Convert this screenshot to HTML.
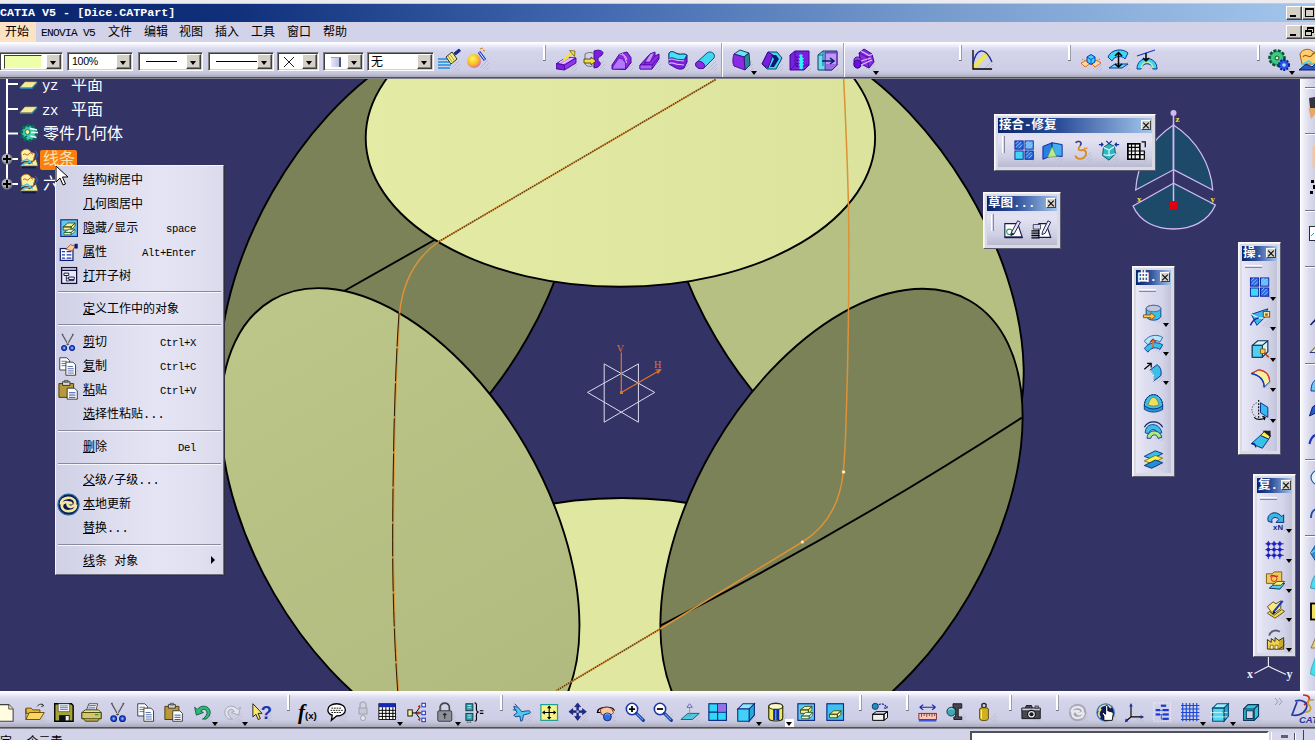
<!DOCTYPE html><html lang="zh"><head><meta charset="utf-8"><title>CATIA V5 - [Dice.CATPart]</title><style>
*{box-sizing:border-box;margin:0;padding:0}
html,body{width:1315px;height:740px;overflow:hidden;background:#d2d2e8}
body{position:relative;font-family:"Liberation Mono","Noto Sans CJK SC",monospace;font-size:12px;color:#000}
.abs{position:absolute}
#top{left:0;top:0;width:1315px;height:4px;background:#ececf0;border-bottom:1px solid #c8c8d0}
#title{left:0;top:4px;width:1315px;height:18px;background:linear-gradient(90deg,#0a246a 0%,#10307c 18%,#4269b0 45%,#7499cc 70%,#a4c6ec 100%)}
#title .t{position:absolute;left:0;top:2px;color:#fff;font:bold 11.7px/14px "Liberation Mono","Noto Sans CJK SC",monospace;white-space:pre;letter-spacing:0}
#menubar{left:0;top:22px;width:1315px;height:20px;background:#d2d2e8}
#menubar span{position:absolute;top:5px;font:12px/13px "Liberation Mono","Noto Sans CJK SC",monospace;white-space:pre}
#menubar span.lat{font-family:"Liberation Mono",monospace;font-size:11.2px;letter-spacing:-.72px}
#tb1{left:0;top:42px;width:1315px;height:37px;background:linear-gradient(180deg,#ffffff 0,#f6f6fd 2px,#dedef2 6px,#d3d3ea 10px,#cecee6 28px,#c2c2d8 32px,#a8a8ba 35px,#50505a 35px,#50505a 36px,#84848e 36px,#84848e 37px)}
#view{left:0;top:79px;width:1300px;height:612px;background:#333366;overflow:hidden}
#tb2{left:0;top:691px;width:1315px;height:38px;background:linear-gradient(180deg,#ffffff 0,#f6f6fd 2px,#dedef2 6px,#d3d3ea 10px,#cecee6 28px,#c2c2d8 32px,#a8a8ba 36px,#50505a 36px,#50505a 37px,#84848e 37px,#84848e 38px)}
#status{left:0;top:729px;width:1315px;height:11px;background:#d2d2e8}
#rcol{left:1300px;top:79px;width:15px;height:612px;background:linear-gradient(90deg,#ffffff 0,#f0f0f8 3px,#dcdcee 9px,#d0d0e6 15px)}
.combo{position:absolute;top:52px;height:19px;background:#fff;border:1px solid;border-color:#808080 #fff #fff #808080;box-shadow:inset 1px 1px 0 #404040, inset -1px -1px 0 #d4d0c8}
.combo .b{position:absolute;right:1px;top:1px;bottom:1px;width:15px;background:#d4d0c8;border:1px solid;border-color:#fff #404040 #404040 #fff;box-shadow:inset -1px -1px 0 #808080}
.combo .b:after{content:"";position:absolute;left:3px;top:6px;border:3.5px solid transparent;border-top:4px solid #000;border-bottom:0}
.sep{position:absolute;width:3px;height:16px;background:#fff;border-right:1px solid #9c9cb0;border-bottom:1px solid #70707c}
.ic{position:absolute;width:24px;height:24px}
.dd{position:absolute;width:0;height:0;border:3.5px solid transparent;border-top:4px solid #000;border-bottom:0}
/* tree */
.tr{position:absolute;color:#fff;font:16px/18px "Liberation Mono","Noto Sans CJK SC",monospace;white-space:pre}
.tr .l{font-family:"Liberation Mono",monospace;font-size:14px;letter-spacing:-.4px}
/* context menu */
#cm{left:55px;top:165px;width:169px;height:410px;background:linear-gradient(90deg,#d0d0e6 0,#dcdcee 30%,#e4e4f4 60%,#e0e0f0 85%,#dadaec 100%);border:1px solid;border-color:#f4f4fc #6e6e80 #6e6e80 #f4f4fc;box-shadow:1px 1px 0 #30303c}
#cm .i{position:absolute;left:27px;font:12px/14px "Liberation Mono","Noto Sans CJK SC",monospace;white-space:pre}
#cm .i .a{font-family:"Liberation Mono",monospace;font-size:10.6px;letter-spacing:-.36px}
#cm .i::first-letter{text-decoration:underline;text-underline-offset:1px}
#cm .k{position:absolute;right:27px;font:10.6px/14px "Liberation Mono",monospace;letter-spacing:-.36px;white-space:pre}
#cm .s{position:absolute;left:2px;right:2px;height:2px;border-top:1px solid #8a8a9c;border-bottom:1px solid #f6f6fe}
/* floating panels */
.pn{position:absolute;background:linear-gradient(180deg,#d6d6ec 0,#e2e2f2 45%,#d0d0e6 75%,#b4b4cc 100%);border:1px solid;border-color:#fafafc #5c5c74 #5c5c74 #fafafc;box-shadow:inset 1px 1px 0 #f0f0f4,inset 0 0 0 3px #dadae4}
.pn.v{background:linear-gradient(90deg,#eeeef8 0,#e0e0f2 25%,#d4d4ea 70%,#bcbcd4 100%)}
.pn .tt{position:absolute;left:3px;top:3px;right:3px;height:15px;background:linear-gradient(90deg,#0a246a 0,#2c4e9a 40%,#a4c6ec 100%);color:#fff;font:bold 12.5px/17px "Liberation Mono","Noto Sans CJK SC",monospace;white-space:pre;overflow:hidden;padding-left:1px}
.pn .x{position:absolute;right:4px;top:5px;width:10px;height:10px;background:#d4d0c8;border:1px solid;border-color:#fff #404040 #404040 #fff;}
.pn .x:before,.pn .x:after{content:"";position:absolute;left:0;top:3.500px;width:8px;height:1.1px;background:#000;transform:rotate(45deg)}
.pn .x:after{transform:rotate(-45deg)}
</style></head><body>
<div id="top" class="abs"></div>
<div id="title" class="abs"><span class="t">CATIA V5 - [Dice.CATPart]</span><div class="abs" style="left:1286px;top:2px;width:16px;height:14px;background:#d4d0c8;border:1px solid;border-color:#fff #404040 #404040 #fff;box-shadow:inset -1px -1px 0 #808080"><div class="abs" style="left:3px;top:8px;width:6px;height:2px;background:#000"></div></div><div class="abs" style="left:1302px;top:2px;width:16px;height:14px;background:#d4d0c8;border:1px solid;border-color:#fff #404040 #404040 #fff;box-shadow:inset -1px -1px 0 #808080"><div class="abs" style="left:2px;top:1px;width:9px;height:9px;border:1px solid #000;border-top-width:2px"></div></div></div>
<div id="menubar" class="abs"><div class="abs" style="left:0;top:0;width:36px;height:20px;background:#fbe3c3"></div>
<span style="left:5px">开始</span>
<span class="lat" style="left:41px">ENOVIA V5</span>
<span style="left:108px">文件</span>
<span style="left:144px">编辑</span>
<span style="left:179px">视图</span>
<span style="left:215px">插入</span>
<span style="left:251px">工具</span>
<span style="left:287px">窗口</span>
<span style="left:323px">帮助</span>
<div class="abs" style="left:1286px;top:3px;width:16px;height:14px;background:#d4d0c8;border:1px solid;border-color:#fff #404040 #404040 #fff;box-shadow:inset -1px -1px 0 #808080"><div class="abs" style="left:3px;top:8px;width:6px;height:2px;background:#000"></div></div><div class="abs" style="left:1302px;top:3px;width:16px;height:14px;background:#d4d0c8;border:1px solid;border-color:#fff #404040 #404040 #fff;box-shadow:inset -1px -1px 0 #808080"><div class="abs" style="left:4px;top:1px;width:7px;height:6px;border:1px solid #000;border-top-width:2px"></div><div class="abs" style="left:2px;top:4px;width:7px;height:6px;border:1px solid #000;border-top-width:2px;background:#d4d0c8"></div></div></div>
<div id="tb1" class="abs"></div>
<div class="combo" style="left:0;width:63px;border-left:0"><div class="abs" style="left:4px;top:2px;width:38px;height:14px;background:#eeffaa;border:1px solid;border-color:#404040 #fff #fff #404040"></div><div class="b"></div></div>
<div class="combo" style="left:67px;width:66px"><span class="abs" style="left:4px;top:2px;font:10.600px/13px 'Liberation Sans',sans-serif;letter-spacing:-.3px">100%</span><div class="b"></div></div>
<div class="combo" style="left:138px;width:65px"><div class="abs" style="left:7px;top:8px;width:31px;height:1px;background:#000"></div><div class="b"></div></div>
<div class="combo" style="left:208px;width:66px"><div class="abs" style="left:7px;top:8px;width:41px;height:1px;background:#000"></div><div class="b"></div></div>
<div class="combo" style="left:277px;width:42px"><svg class="abs" style="left:5px;top:3px" width="12" height="12"><path d="M1 1l10 10M11 1l-10 10" stroke="#202020" stroke-width="1"/></svg><div class="b"></div></div>
<div class="combo" style="left:323px;width:41px"><div class="abs" style="left:7px;top:4px;width:10px;height:10px;background:linear-gradient(90deg,#e8e8f8,#b8c0e0);border-right:2px solid #505070;border-top:1px solid #a0a0c0"></div><div class="b"></div></div>
<div class="combo" style="left:367px;width:67px"><span class="abs" style="left:3px;top:1px;font:12px/14px 'Noto Sans CJK SC',sans-serif">无</span><div class="b"></div></div>
<svg class="abs" style="left:437px;top:48px" width="24" height="24" viewBox="0 0 24 24"><path d="M14 21l8-8M17 22l6-6M20 23l3-3" stroke="#a8a8bc" stroke-width="1" opacity=".55"/><path d="M1 11h10M1 14h12M1 17h13M1 20h12" stroke="#1890e0" stroke-width="1.6"/><path d="M9 9l6-5 5 7-6 5z" fill="#f4f090" stroke="#303030" stroke-width="1"/><path d="M11 8l5 7M13 6.500l5 7" stroke="#b0a020" stroke-width="1"/><path d="M17 5l5-4 1.500 2-5 4z" fill="#1030a0" stroke="#081860" stroke-width=".8"/></svg>
<svg class="abs" style="left:466px;top:47px" width="24" height="24" viewBox="0 0 24 24"><path d="M14 21l8-8M17 22l6-6M20 23l3-3" stroke="#a8a8bc" stroke-width="1" opacity=".55"/><defs><radialGradient id="gb" cx=".4" cy=".35" r=".7"><stop offset="0" stop-color="#fff860"/><stop offset=".55" stop-color="#f8c020"/><stop offset="1" stop-color="#e060c0"/></radialGradient></defs><circle cx="8" cy="14" r="7" fill="url(#gb)"/><path d="M13 5l6 8" stroke="#1840c0" stroke-width="3"/><path d="M13.500 5.500l5 7" stroke="#fff" stroke-width="1"/><path d="M14 2l3-1M17 3l2 1" stroke="#e08030" stroke-width="1.2"/></svg>
<div class="sep" style="left:543px;top:45px"></div>
<svg class="abs" style="left:554px;top:48px" width="24" height="24" viewBox="0 0 24 24"><path d="M14 21l8-8M17 22l6-6M20 23l3-3" stroke="#a8a8bc" stroke-width="1" opacity=".55"/><path d="M2.500 15.500L13 9l9 1-11.500 7z" fill="#c48cff" stroke="#4a0aa0" stroke-width=".9"/><path d="M2.500 15.500l8 1.500v5l-8-1z" fill="#7a1ee0" stroke="#4a0aa0" stroke-width=".9"/><path d="M10.500 17L22 10v5l-11.500 7z" fill="#8e36ec" stroke="#4a0aa0" stroke-width=".9"/><path d="M5.500 14.500l9-5M8.500 15.500l10-5.500" stroke="#f0c8ff" stroke-width="1.300"/><path d="M9.500 12l9-7.500" stroke="#f0e040" stroke-width="2.600"/><path d="M15.500 2.500l5.500.5-.5 5.500z" fill="#f0e040" stroke="#605000" stroke-width=".7"/></svg>
<svg class="abs" style="left:582px;top:48px" width="24" height="24" viewBox="0 0 24 24"><path d="M14 21l8-8M17 22l6-6M20 23l3-3" stroke="#a8a8bc" stroke-width="1" opacity=".55"/><path d="M12 3c5-2 9 0 9 2s-4 4-5 5v3c3 1 3 4 0 6l-4 1z" fill="#7a1ee0" stroke="#4a0aa0"/><path d="M3 6c3-2 7-2 9 0M3 6v10c2 3 7 3 9 1" stroke="#707070" stroke-width="1" fill="none"/><path d="M2 11h7v-2l5 4-5 4v-2h-7z" fill="#f0e040" stroke="#403000" stroke-width=".8"/></svg>
<svg class="abs" style="left:610px;top:48px" width="24" height="24" viewBox="0 0 24 24"><path d="M14 21l8-8M17 22l6-6M20 23l3-3" stroke="#a8a8bc" stroke-width="1" opacity=".55"/><path d="M2 21v-4l7.500-11 7.500-2 4 5.500v5l-5.500 7z" fill="#8a2be2" stroke="#4a0aa0"/><path d="M2 21l2-4 5-7 3.500 1 3 4v6z" fill="#b478ff" stroke="#4a0aa0" stroke-width=".7"/><path d="M9.500 6c3 0 5 2 6 5l1 4M12 5.500c2 1 4 3 5 6" stroke="#dcc0ff" stroke-width="1" fill="none"/><path d="M15.500 21.500l5.500-7" stroke="#4a0aa0"/></svg>
<svg class="abs" style="left:638px;top:48px" width="24" height="24" viewBox="0 0 24 24"><path d="M14 21l8-8M17 22l6-6M20 23l3-3" stroke="#a8a8bc" stroke-width="1" opacity=".55"/><path d="M2 21v-4l10-11 5-2v4l4-2v5l-7 10z" fill="#8a2be2" stroke="#4a0aa0"/><path d="M2 17l5 0 0-3 5-8M7 17l7 0 7-8M7 14l5 0 5-6" stroke="#4a0aa0" stroke-width=".8" fill="none"/><path d="M7 14l5-8 4.500-1.500-4.500 9.500z" fill="#c890ff" stroke="#4a0aa0" stroke-width=".6"/><path d="M2 17h12v4h-12z" fill="#a860f8" stroke="#4a0aa0" stroke-width=".7"/></svg>
<svg class="abs" style="left:666px;top:48px" width="24" height="24" viewBox="0 0 24 24"><path d="M14 21l8-8M17 22l6-6M20 23l3-3" stroke="#a8a8bc" stroke-width="1" opacity=".55"/><path d="M3 5c3-3 6 0 9 1s6-1 9 1v7l-3 6c-3 2-6 1-8 0l-7-4z" fill="#7a1ee0" stroke="#3a0a90"/><path d="M3 5c3-3 6 0 9 1s6-1 9 1l-3 5c-3-1-5 0-8-1s-5-2-7 0z" fill="#48e0f4" stroke="#0a5070"/><path d="M3 12c2-2 4-1 7 0s5 0 8 1M3 15.500c2-1.500 4-.5 7 .5s5 0 8 1" stroke="#d8b0ff" stroke-width="1.200" fill="none"/></svg>
<svg class="abs" style="left:694px;top:48px" width="24" height="24" viewBox="0 0 24 24"><path d="M14 21l8-8M17 22l6-6M20 23l3-3" stroke="#a8a8bc" stroke-width="1" opacity=".55"/><path d="M2 15l11-10c4-3 9 1 7 5l-10 10c-4 2-10-1-8-5z" fill="#40d8f0" stroke="#0a5070"/><path d="M2 15c1-3 6-2 8 1 1 2 1 3 0 4-4 2-10-1-8-5z" fill="#8a2be2" stroke="#4a0aa0"/></svg>
<div class="abs" style="left:721px;top:43px;width:2px;height:34px;background:#fff;border-left:1px solid #a0a0b6"></div>
<svg class="abs" style="left:730px;top:48px" width="24" height="24" viewBox="0 0 24 24"><path d="M14 21l8-8M17 22l6-6M20 23l3-3" stroke="#a8a8bc" stroke-width="1" opacity=".55"/><path d="M4 6l6-4 9 3-5 4z" fill="#68e4f4" stroke="#0a3050" stroke-width=".9"/><path d="M14 9l5-4 1 12-5 5z" fill="#2a8896" stroke="#0a3050" stroke-width=".9"/><path d="M4 6l10 3 1 13-11-4c-2-4-1-9 0-12z" fill="#8a2be2" stroke="#3a0a90" stroke-width=".9"/></svg>
<svg class="abs" style="left:760px;top:48px" width="24" height="24" viewBox="0 0 24 24"><path d="M14 21l8-8M17 22l6-6M20 23l3-3" stroke="#a8a8bc" stroke-width="1" opacity=".55"/><path d="M2 16l6-12h9l5 6-6 11h-9z" fill="#40d8f0" stroke="#0a4060"/><path d="M2 16l6-12 5 3-5 13z" fill="#7a1ee0" stroke="#3a0a90"/><path d="M11 7h5l3 4-5 8h-4l4-8z" fill="#0a1a70"/></svg>
<svg class="abs" style="left:788px;top:48px" width="24" height="24" viewBox="0 0 24 24"><path d="M14 21l8-8M17 22l6-6M20 23l3-3" stroke="#a8a8bc" stroke-width="1" opacity=".55"/><path d="M2 7l5-4h14v14l-5 5h-14z" fill="#7a1ee0" stroke="#3a0a90"/><path d="M7 3v14l-5 5M7 17h14" stroke="#3a0a90" stroke-width=".7" fill="none"/><path d="M11 7l2-1 2 1.500-1 1.500 2 1.500-1.500 1.500 1.500 1.500-1.500 1.500 1.500 1.500-1.500 1.500 1 2-2 1.500-2.500-1 1-2-1.500-1.500 1.500-1.500-1.500-1.500 1.500-1.500-1.500-1.500 1.500-1.500z" fill="#30f0f8"/><path d="M8 9l2 .5M8 12l2 .5M8 15l2 .5M8 18l2 .5" stroke="#0a1a70" stroke-width="1"/></svg>
<svg class="abs" style="left:816px;top:48px" width="24" height="24" viewBox="0 0 24 24"><path d="M14 21l8-8M17 22l6-6M20 23l3-3" stroke="#a8a8bc" stroke-width="1" opacity=".55"/><path d="M2 7l5-4h14v14l-5 5h-14z" fill="#68dcf0" stroke="#0a4060"/><path d="M9 4h12v13l-5 5h-7z" fill="#9a68e0" stroke="#3a0a90" stroke-width=".7"/><path d="M10 6h10v10h-10z" fill="#c8a8f8" opacity=".75"/><path d="M7 3v15M2 7h5" stroke="#0a4060" stroke-width=".7" fill="none"/><path d="M6 13h11M14 10l4 3-4 3" stroke="#0a1a70" stroke-width="1.500" fill="none"/></svg>
<div class="dd" style="left:751px;top:71px"></div>
<div class="abs" style="left:843px;top:43px;width:2px;height:34px;background:#fff;border-left:1px solid #a0a0b6"></div>
<svg class="abs" style="left:852px;top:48px" width="24" height="24" viewBox="0 0 24 24"><path d="M14 21l8-8M17 22l6-6M20 23l3-3" stroke="#a8a8bc" stroke-width="1" opacity=".55"/><path d="M7 5l5-4 8 5 2 8-5 6-8-4z" fill="#8a2be2" stroke="#3a0a90"/><path d="M7 5l8 4 2 11M15 9l5-3" stroke="#3a0a90" stroke-width=".8" fill="none"/><path d="M9 3l8 4.500 4-1.500" stroke="#dcc0ff" stroke-width="1.200" fill="none"/><path d="M2 12c0-4 7-4 7 0v5c0 4-7 4-7 0z" fill="#9a40f0" stroke="#3a0a90"/><ellipse cx="5.500" cy="16" rx="3.500" ry="4" fill="#7010e0" stroke="#3a0a90"/><path d="M9 13l10-3M9 17l11-5" stroke="#dcc0ff" stroke-width="1.200" fill="none"/></svg>
<div class="dd" style="left:873px;top:71px"></div>
<div class="sep" style="left:959px;top:45px"></div>
<svg class="abs" style="left:970px;top:48px" width="24" height="24" viewBox="0 0 24 24"><path d="M14 21l8-8M17 22l6-6M20 23l3-3" stroke="#a8a8bc" stroke-width="1" opacity=".55"/><path d="M4 19l14-14" stroke="#f0e850" stroke-width="3.500"/><path d="M3 2v19h19" stroke="#000" stroke-width="1.300" fill="none"/><path d="M3 16c3-16 12-18 19-2" stroke="#1828b0" stroke-width="1.300" fill="none"/></svg>
<div class="sep" style="left:1068px;top:45px"></div>
<svg class="abs" style="left:1079px;top:48px" width="24" height="24" viewBox="0 0 24 24"><path d="M14 21l8-8M17 22l6-6M20 23l3-3" stroke="#a8a8bc" stroke-width="1" opacity=".55"/><path d="M2 15l6-3 4 3-6 4z" fill="#ffd8a0" stroke="#e07020"/><path d="M12 15l5-3 5 3-6 4z" fill="#ffd8a0" stroke="#e07020"/><path d="M3 11l4 2M21 11l-4 2" stroke="#e07020" stroke-dasharray="1.500 1"/><path d="M8 9l4-2.500 4 2.500v5l-4 2.500-4-2.500z" fill="#40d0f8" stroke="#0838c0"/><path d="M8 9l4 2.500 4-2.500M12 11.500v5" stroke="#0838c0" stroke-width=".8" fill="none"/></svg>
<svg class="abs" style="left:1107px;top:48px" width="24" height="24" viewBox="0 0 24 24"><path d="M14 21l8-8M17 22l6-6M20 23l3-3" stroke="#a8a8bc" stroke-width="1" opacity=".55"/><path d="M1 9c3-8 15-9 20-4l-3 6c-3-4-11-3-13 2z" fill="#40d8f0" stroke="#0838a0"/><path d="M2 20l6-4h13l-6 4z" fill="#60e0f8" stroke="#0838a0"/><path d="M11.500 5v14M8 8l3.500-3.500 3.500 3.500M8 16l3.500 3 3.500-3" stroke="#000" stroke-width="1.500" fill="none"/></svg>
<svg class="abs" style="left:1135px;top:48px" width="24" height="24" viewBox="0 0 24 24"><path d="M14 21l8-8M17 22l6-6M20 23l3-3" stroke="#a8a8bc" stroke-width="1" opacity=".55"/><path d="M2 8l18-6" stroke="#1838c0" stroke-width="1.300"/><path d="M2 21c0-14 20-14 20 0l-4 0c-1-7-11-7-12 0z" fill="#40d8f0" stroke="#0838a0"/><path d="M6 20c2-8 10-8 12 0" fill="none" stroke="#c0f0a0" stroke-width="1.500"/><path d="M11 5v8M8 10l3 3 3-3" stroke="#000" stroke-width="1.500" fill="none"/></svg>
<div class="sep" style="left:1257px;top:45px"></div>
<svg class="abs" style="left:1268px;top:48px" width="24" height="24" viewBox="0 0 24 24"><path d="M14 21l8-8M17 22l6-6M20 23l3-3" stroke="#a8a8bc" stroke-width="1" opacity=".55"/><circle cx="9" cy="10" r="7.500" fill="#30b878" stroke="#0a5030" stroke-dasharray="3 1.500" stroke-width="2.500"/><circle cx="9" cy="10" r="5.500" fill="#40c888"/><circle cx="9" cy="10" r="2" fill="#e8f8a0" stroke="#0a5030"/><circle cx="16" cy="17" r="5" fill="#2858e8" stroke="#0820a0" stroke-dasharray="2 1.200" stroke-width="2"/><circle cx="16" cy="17" r="1.800" fill="#c0d8ff"/></svg>
<div class="dd" style="left:1289px;top:71px"></div>
<svg class="abs" style="left:1298px;top:48px" width="24" height="24" viewBox="0 0 24 24"><path d="M2 6c2-5 9-6 12-3s8 0 9 3l-2 10h-17z" fill="#ffd070" stroke="#a06010"/><path d="M5 9c3-5 6 3 9-2s5 1 6 0" stroke="#b05a10" stroke-width="1.300" fill="none"/><path d="M1 22l7-6 6 3 6-6 3 9z" fill="#2858c8" stroke="#081860"/><path d="M3 17l8-4 5 4" stroke="#40d8f0" stroke-width="1.500" fill="none"/></svg>
<div id="view" class="abs"><svg class="abs" style="left:0;top:0" width="1300" height="612" viewBox="0 79 1300 612">
<defs><linearGradient id="gy" x1="0" x2="1" y1="0" y2="0"><stop offset="0" stop-color="#e3eba4"/><stop offset="1" stop-color="#dbe39c"/></linearGradient><linearGradient id="gm" gradientUnits="userSpaceOnUse" x1="-255" x2="255" y1="0" y2="0"><stop offset="0" stop-color="#bcc688"/><stop offset="1" stop-color="#b0ba7f"/></linearGradient></defs>
<ellipse cx="0" cy="0" rx="254.7" ry="149.0" transform="translate(622.2 647.0) rotate(0.0)" fill="#dfe7a0" stroke="#000" stroke-width="1.9"/>
<ellipse cx="0" cy="0" rx="256.4" ry="146.9" transform="translate(399.7 265.3) rotate(-60.3)" fill="#7b8258" stroke="#000" stroke-width="1.9"/>
<ellipse cx="0" cy="0" rx="257.5" ry="145.9" transform="translate(841.8 264.3) rotate(59.2)" fill="#b6c083" stroke="#000" stroke-width="1.9"/>
<path d="M330 299 L445 234" stroke="#000" stroke-width="1.9" fill="none"/>
<ellipse cx="0" cy="0" rx="254.7" ry="149.0" transform="translate(620.4 137.8) rotate(0.0)" fill="url(#gy)" stroke="#000" stroke-width="1.9"/>
<ellipse cx="0" cy="0" rx="254.7" ry="145.7" transform="translate(400.0 520.3) rotate(59.9)" fill="url(#gm)" stroke="#000" stroke-width="1.9"/>
<ellipse cx="0" cy="0" rx="255.1" ry="147.6" transform="translate(841.5 521.2) rotate(-59.7)" fill="#7b8258" stroke="#000" stroke-width="1.9"/>
<path d="M660.5 625.6 Q846.9 530.8 1021.8 417.6" stroke="#000" stroke-width="1.9" fill="none"/>
<path d="M843.7 79 C846 130 848.5 180 848.8 230 C849.2 290 848.5 340 846.4 410 C845.6 440 844.6 458 843.3 472 C840 505 825 528 802.4 542 L660 629" stroke="#dc9238" stroke-width="1.5" fill="none"/>
<path d="M660 629 L556.5 690.5" stroke="#dc9238" stroke-width="1.6" fill="none"/>
<path d="M660 629 L556.5 690.5" stroke="#5a3a10" stroke-width="1.6" stroke-dasharray="1.2 1.2" fill="none"/>
<path d="M439 241.5 L715.7 79.5" stroke="#dc9238" stroke-width="1.6" fill="none"/>
<path d="M439 241.5 L715.7 79.5" stroke="#5a3a10" stroke-width="1.6" stroke-dasharray="1.2 1.2" fill="none"/>
<path d="M439 241.5 C418 256 403 280 399.5 313.5" stroke="#dc9238" stroke-width="1.5" fill="none"/>
<path d="M399.5 313.5 C397 350 395.5 390 394.5 430 C393.5 480 392.8 530 393.3 570 C394 620 396 660 398.2 691" stroke="#dc9238" stroke-width="2" fill="none"/>
<path d="M399 313.5 C396.5 350 395 390 394 430 C393 480 392.3 530 392.8 570 C393.5 620 395.5 660 397.7 691" stroke="#2a1a08" stroke-width="1" stroke-dasharray="33 2" fill="none"/>
<rect x="842" y="470.5" width="3" height="3" fill="#fff" stroke="#dc9238" stroke-width=".6"/>
<circle cx="802.4" cy="542" r="1.6" fill="#fff" stroke="#dc9238" stroke-width=".6"/>
<path d="M604.2 363.9 L654.7 392.4 L604.2 422.2 Z M638.4 363.9 L587.5 392.4 L638.4 422.2 Z" stroke="#dcdcf0" stroke-width="1" fill="none"/>
<path d="M621.3 392.4 V352.5 M621.3 392.4 L660 370.2 M655.5 370 L660.5 369.6 L657.6 373.6" stroke="#e0742c" stroke-width="1.2" fill="none"/>
<rect x="620" y="391" width="3" height="3" fill="#e0742c"/>
<text x="616.8" y="352" font-family="Liberation Serif,serif" font-size="10" fill="#e0742c">V</text>
<text x="654" y="368" font-family="Liberation Serif,serif" font-size="10" fill="#e0742c">H</text>
<path d="M1173.500 125C1150 140 1137 165 1135.700 190L1173.500 169.700Z" fill="#1c4a68" stroke="#d4b8f4" stroke-width="1.300"/>
<path d="M1173.500 125C1197 140 1211 165 1212.700 190L1173.500 169.700Z" fill="#1c4a68" stroke="#d4b8f4" stroke-width="1.300"/>
<path d="M1173.500 183.200L1133 206C1140 222 1156 229 1173.500 229S1208 222 1215.400 205Z" fill="#1c4a68" stroke="#d4b8f4" stroke-width="1.300"/>
<path d="M1173.500 116V204" stroke="#d4b8f4" stroke-width="1.500"/>
<circle cx="1173.500" cy="113" r="3" fill="#d4b8f4"/>
<rect x="1169.500" y="201" width="8" height="8.500" fill="#e00010"/>
<text x="1175.5" y="122" font-family="Liberation Serif,serif" font-weight="bold" font-size="9" fill="#f0e040">z</text>
<text x="1137" y="202" font-family="Liberation Serif,serif" font-weight="bold" font-size="9" fill="#f0e040">x</text>
<text x="1210.5" y="202" font-family="Liberation Serif,serif" font-weight="bold" font-size="9" fill="#f0e040">y</text>
<path d="M1268.400 666.300V657M1268.400 666.300L1254.500 673.500M1268.400 666.300L1286 674.500" stroke="#f0f0f8" stroke-width="1.100" fill="none"/>
<text x="1247" y="678" font-family="Liberation Serif,serif" font-weight="bold" font-size="12" fill="#f0f0f8">x</text><text x="1286.500" y="678" font-family="Liberation Serif,serif" font-weight="bold" font-size="12" fill="#f0f0f8">y</text>
</svg><div class="abs" style="left:0;top:-79px"><svg class="abs" style="left:0;top:79px" width="60" height="120" viewBox="0 79 60 120">
<path d="M7 79V184 M7 84H18 M7 109H18 M7 133.500H18 M7 159H18 M7 184H18" stroke="#fff" stroke-width="2" fill="none"/>
<path d="M20 87.5l5-5.500h12l-5 5.500z" fill="#f4ec98" stroke="#c8b850" stroke-width=".6"/><path d="M20 88.3h12l5-5.500" stroke="#2880b0" stroke-width="1.200" fill="none"/>
<path d="M20 112.5l5-5.500h12l-5 5.500z" fill="#f4ec98" stroke="#c8b850" stroke-width=".6"/><path d="M20 113.3h12l5-5.500" stroke="#2880b0" stroke-width="1.200" fill="none"/>
<circle cx="29" cy="133" r="7.500" fill="#28b898" stroke="#0a6858" stroke-width="3.400" stroke-dasharray="2.600 2.100"/><circle cx="29" cy="133" r="6" fill="#38d0b0"/><circle cx="27.500" cy="132" r="2.400" fill="#f4f490" stroke="#0a6050" stroke-width=".8"/><path d="M30 128.500l7 1.500M31 132.500l7 0M30.500 136l6 1.500" stroke="#f0fffa" stroke-width="1.300"/><path d="M24 138l3-2" stroke="#0a5040" stroke-width="1.200"/>
<g transform="translate(20 150.0)"><path d="M1 3c1-4 7-5 9-2s4 1 5 3l-2 7h-11z" fill="#fff0a0" stroke="#b87820" stroke-width=".8"/><path d="M3 5c2-3 4 2 6-1s3 1 4 0" stroke="#b05a10" stroke-width="1" fill="none"/><path d="M0 16l5-4 5 2 6-5 2 7z" fill="#f4f0a0" stroke="#705010" stroke-width=".7"/><path d="M2 17.500h14" stroke="#101850" stroke-width="1.600"/><path d="M1 12l6-3 4 3M2 15l7-3 4 2" stroke="#40c8f0" stroke-width="1.200" fill="none"/><path d="M15 1c3 2 3 6 0 8" stroke="#3070d0" stroke-width="1" fill="none"/></g>
<g transform="translate(20 175.0)"><path d="M1 3c1-4 7-5 9-2s4 1 5 3l-2 7h-11z" fill="#fff0a0" stroke="#b87820" stroke-width=".8"/><path d="M3 5c2-3 4 2 6-1s3 1 4 0" stroke="#b05a10" stroke-width="1" fill="none"/><path d="M0 16l5-4 5 2 6-5 2 7z" fill="#f4f0a0" stroke="#705010" stroke-width=".7"/><path d="M2 17.500h14" stroke="#101850" stroke-width="1.600"/><path d="M1 12l6-3 4 3M2 15l7-3 4 2" stroke="#40c8f0" stroke-width="1.200" fill="none"/><path d="M15 1c3 2 3 6 0 8" stroke="#3070d0" stroke-width="1" fill="none"/></g>
<circle cx="7" cy="159" r="5.500" fill="#80808c"/><circle cx="6.300" cy="158.3" r="4.200" fill="#b0b0bc"/><path d="M3 159h8M7 155v8" stroke="#000" stroke-width="2"/>
<circle cx="7" cy="184" r="5.500" fill="#80808c"/><circle cx="6.300" cy="183.3" r="4.200" fill="#b0b0bc"/><path d="M3 184h8M7 180v8" stroke="#000" stroke-width="2"/>
</svg>
<div class="tr" style="left:42px;top:77px"><span class="l">yz</span></div><div class="tr" style="left:71px;top:77px">平面</div>
<div class="tr" style="left:42px;top:102px"><span class="l">zx</span></div><div class="tr" style="left:71px;top:102px">平面</div>
<div class="tr" style="left:43px;top:126px">零件几何体</div>
<div class="abs" style="left:40px;top:150px;width:37px;height:20px;background:#fb7f0e;border-radius:2px"></div>
<div class="tr" style="left:43px;top:151px;color:#fbe0b0">线条</div>
<div class="tr" style="left:43px;top:176px">六</div></div></div>
<div id="cm" class="abs">
<span class="i" style="top:8px">结构树居中</span>
<span class="i" style="top:32px">几何图居中</span>
<span class="i" style="top:56px">隐藏/显示</span>
<span class="k" style="top:56px">space</span>
<span class="i" style="top:80px">属性</span>
<span class="k" style="top:80px">Alt+Enter</span>
<span class="i" style="top:104px">打开子树</span>
<div class="s" style="top:125px"></div>
<span class="i" style="top:137px">定义工作中的对象</span>
<div class="s" style="top:158px"></div>
<span class="i" style="top:170px">剪切</span>
<span class="k" style="top:170px">Ctrl+X</span>
<span class="i" style="top:194px">复制</span>
<span class="k" style="top:194px">Ctrl+C</span>
<span class="i" style="top:218px">粘贴</span>
<span class="k" style="top:218px">Ctrl+V</span>
<span class="i" style="top:242px">选择性粘贴...</span>
<div class="s" style="top:264px"></div>
<span class="i" style="top:275px">删除</span>
<span class="k" style="top:275px">Del</span>
<div class="s" style="top:297px"></div>
<span class="i" style="top:308px">父级/子级...</span>
<span class="i" style="top:332px">本地更新</span>
<span class="i" style="top:356px">替换...</span>
<div class="s" style="top:378px"></div>
<span class="i" style="top:389px">线条 对象</span>
<div class="abs" style="left:155px;top:390px;border:4px solid transparent;border-left:4px solid #000;border-right:0"></div>
<svg class="abs" style="left:3.5px;top:52.5px" width="19" height="19" viewBox="0 0 24 24"><rect x="1" y="1" width="21" height="21" fill="#60c8f0" stroke="#0a2880" stroke-width="1.400"/><path d="M4 10l6-5h9l-5 5z M4 10h10v4h-10z M14 10l5-5v4l-5 5z" fill="#f0f0a0" stroke="#304000" stroke-width="1"/><path d="M5 17l6-4h8l-5 4z M5 17h9v3h-9z M14 17l5-4v3l-5 4z" fill="#e8f8e8" stroke="#306030" stroke-width="1"/></svg><svg class="abs" style="left:3px;top:77px" width="20" height="19" viewBox="0 0 24 24"><rect x="1" y="7" width="16" height="15" fill="#fff" stroke="#0a1a70" stroke-width="1.500"/><path d="M3 11h4M9 11h6M3 15h4M9 15h6M3 19h4M9 19h6" stroke="#1838c0" stroke-width="1.600"/><path d="M8 8l6-6 6 2-4 6z" fill="#f8c8a0" stroke="#804020" stroke-width=".9"/><rect x="19" y="1" width="4" height="6" fill="#0a1a70"/></svg><svg class="abs" style="left:4px;top:100px" width="19" height="19" viewBox="0 0 24 24"><rect x="2" y="2" width="19" height="20" fill="#e8e8f8" stroke="#101040" stroke-width="1.600"/><path d="M2 5.500h19" stroke="#101040" stroke-width="1.600"/><path d="M5 9h6v3h-6zM11 14h7v3h-7zM11 18.500h7" stroke="#101040" stroke-width="1.200" fill="#fff"/><path d="M8 12v7h3M8 15.500h3" stroke="#101040" stroke-width="1" fill="none"/></svg><svg class="abs" style="left:3px;top:166px" width="19" height="21" viewBox="0 0 24 24"><path d="M4 1l8 14M18 1l-8 14" stroke="#50505c" stroke-width="2"/><path d="M5.500 2l6.500 11.500M16.500 2l-6.500 11.500" stroke="#e8e8f0" stroke-width=".8"/><circle cx="6.500" cy="19" r="3.300" fill="#2858e0" stroke="#0a1c90" stroke-width="1.200"/><circle cx="16.500" cy="19" r="3.300" fill="#2858e0" stroke="#0a1c90" stroke-width="1.200"/><circle cx="6.500" cy="19" r="1.200" fill="#a0c0ff"/><circle cx="16.500" cy="19" r="1.200" fill="#a0c0ff"/></svg><svg class="abs" style="left:2px;top:190px" width="21" height="21" viewBox="0 0 24 24"><path d="M14 21l8-8M17 22l6-6M20 23l3-3" stroke="#a8a8bc" stroke-width="1" opacity=".55"/><path d="M2 2h8l3 3v11h-11z" fill="#fff" stroke="#303030"/><path d="M4 6h6M4 8.500h7M4 11h7" stroke="#3050a0" stroke-width=".9"/><path d="M9 7h8l3 3v12h-11z" fill="#fff" stroke="#303030"/><path d="M11 12h6M11 14.500h7M11 17h7M11 19.500h7" stroke="#3050a0" stroke-width=".9"/></svg><svg class="abs" style="left:2px;top:213px" width="22" height="22" viewBox="0 0 24 24"><path d="M14 21l8-8M17 22l6-6M20 23l3-3" stroke="#a8a8bc" stroke-width="1" opacity=".55"/><path d="M1 5h16v15h-16z" fill="#b89838" stroke="#403000"/><path d="M5 3h8v4h-8z" fill="#d8d8d8" stroke="#303030"/><path d="M7 1.500h4v2h-4z" fill="#909090" stroke="#303030" stroke-width=".6"/><path d="M10 10h8l3 3v9h-11z" fill="#fff" stroke="#303030"/><path d="M12 15h7M12 17.500h7M12 20h7" stroke="#2040a0" stroke-width="1"/></svg><svg class="abs" style="left:1px;top:327px" width="23" height="23" viewBox="0 0 24 24"><circle cx="12" cy="12" r="11" fill="#101850"/><path d="M4 12c0-9 14-9 15-2 0 5-7 6-8 2 0-2.500 4-2.500 4 0M20 12c0 9-14 9-15 2 0-5 7-6 8-2" stroke="#f0e8a0" stroke-width="2.800" fill="none"/><circle cx="12" cy="12" r="11" fill="none" stroke="#2868a8" stroke-width="1.200"/></svg>
</div>
<svg class="abs" style="left:55px;top:165px" width="14" height="22" viewBox="0 0 14 22"><path d="M1 1v16l4-4 3 7 2.500-1-3-7h5.500z" fill="#fff" stroke="#000" stroke-width="1"/></svg>
<div class="pn" style="left:994px;top:114px;width:162px;height:57px"><div class="tt">接合-修复</div><div class="x"></div><div class="abs" style="left:7px;top:21px;width:3px;height:17px;border-left:1px solid #fff;border-right:1px solid #8888a0;background:#d8d8ea"></div><svg class="abs" style="left:19px;top:25px" width="22" height="22" viewBox="0 0 24 24"><path d="M14 21l8-8M17 22l6-6M20 23l3-3" stroke="#a8a8bc" stroke-width="1" opacity=".55"/><rect x="1" y="1" width="9" height="9" fill="#2868e0" stroke="#0820a0"/><rect x="12" y="1" width="9" height="9" fill="#60b8f8" stroke="#0820a0"/><rect x="1" y="12" width="9" height="9" fill="#40d8f0" stroke="#0820a0"/><rect x="12" y="12" width="9" height="9" fill="#2868e0" stroke="#0820a0"/><path d="M2 4l3-3M2 8l6-6M5 9l4-4M13 4l3-3M13 8l6-6M16 9l4-4M13 15l3-3M13 19l6-6M16 20l4-4" stroke="#a0d8ff" stroke-width=".9"/></svg><svg class="abs" style="left:47px;top:25px" width="22" height="22" viewBox="0 0 24 24"><path d="M14 21l8-8M17 22l6-6M20 23l3-3" stroke="#a8a8bc" stroke-width="1" opacity=".55"/><path d="M1 7l10-4v14l-10 4z" fill="#2880e0" stroke="#0820a0"/><path d="M11 3l11 2v13l-11-1z" fill="#40b0f0" stroke="#0820a0"/><path d="M6 19l5-12 5 11z" fill="#b8e890" stroke="#508030" stroke-width=".6"/></svg><svg class="abs" style="left:76px;top:25px" width="22" height="22" viewBox="0 0 24 24"><path d="M14 21l8-8M17 22l6-6M20 23l3-3" stroke="#a8a8bc" stroke-width="1" opacity=".55"/><path d="M5 3c3-3 8-1 5 3s-2 6 2 5c5-1 6 5 2 8s-9 1-9-2" stroke="#e08820" stroke-width="2" fill="none"/><path d="M5 3c3-3 8-1 5 3" stroke="#1838c0" stroke-width="1.400" fill="none"/><path d="M14 9h4" stroke="#e08820" stroke-width="1.200"/></svg><svg class="abs" style="left:103px;top:25px" width="22" height="22" viewBox="0 0 24 24"><path d="M14 21l8-8M17 22l6-6M20 23l3-3" stroke="#a8a8bc" stroke-width="1" opacity=".55"/><path d="M6 8l6-4 6 3 1 8-7 7-7-5z" fill="#30b8c0" stroke="#0a5060"/><path d="M6 8l6 3 6-4M12 11l0 6-6-1M12 17l7-2" stroke="#c8f8ff" stroke-width="1.400" fill="none"/><path d="M1 5h4M3.500 3l2 2-2 2M23 5h-4M20.500 3l-2 2 2 2" stroke="#1028a0" stroke-width="1.200" fill="none"/><path d="M9 1l3 3 3-3" stroke="#1028a0" stroke-width="1.200" fill="none"/></svg><svg class="abs" style="left:131px;top:25px" width="22" height="22" viewBox="0 0 24 24"><path d="M14 21l8-8M17 22l6-6M20 23l3-3" stroke="#a8a8bc" stroke-width="1" opacity=".55"/><path d="M2 4h13v17h-13zM2 8h13M2 12h18M2 16h18M6 4v17M10 4v17M15 12h5v9h-5" fill="#f4f4f4" stroke="#000" stroke-width="1.300"/><path d="M2 4h13v17h-13z" fill="none" stroke="#000" stroke-width="1.600"/><path d="M17 2h4v6" stroke="#000" stroke-width="1.300" fill="none"/></svg></div>
<div class="pn" style="left:983px;top:192px;width:78px;height:57px"><div class="tt">草图...</div><div class="x"></div><div class="abs" style="left:7px;top:21px;width:3px;height:17px;border-left:1px solid #fff;border-right:1px solid #8888a0;background:#d8d8ea"></div><svg class="abs" style="left:19px;top:26px" width="22" height="22" viewBox="0 0 24 24"><path d="M14 21l8-8M17 22l6-6M20 23l3-3" stroke="#a8a8bc" stroke-width="1" opacity=".55"/><path d="M2 5h14l5 15h-19z" fill="#fff" stroke="#181850" stroke-width="1.200"/><path d="M2 20h19" stroke="#181850" stroke-width="2"/><circle cx="7" cy="14" r="3" fill="none" stroke="#30a060" stroke-width="1.200"/><path d="M9 15l7-13 3 1.500-7 13-3.500 1.500z" fill="#e8e8f0" stroke="#181850" stroke-width="1"/><path d="M9 15l3 1.500" stroke="#181850"/><path d="M8.500 18l1-2.500 2 1z" fill="#000"/></svg><svg class="abs" style="left:46px;top:26px" width="23" height="22" viewBox="0 0 24 24"><path d="M14 21l8-8M17 22l6-6M20 23l3-3" stroke="#a8a8bc" stroke-width="1" opacity=".55"/><path d="M9 5h8l5 15h-13z" fill="#fff" stroke="#181850" stroke-width="1.200"/><path d="M13 14l6-12 3 1.500-6 12-3.500 1.500z" fill="#e8e8f0" stroke="#181850" stroke-width="1"/><path d="M1 13h9M1 15.500h9M1 18h9M1 20.500h9" stroke="#000" stroke-width="1.400"/><path d="M3 6h8v5h-8z" fill="#d8d8e8" stroke="#404060"/></svg></div>
<div class="pn v" style="left:1132px;top:266px;width:43px;height:211px"><div class="tt">曲.</div><div class="x"></div><div class="abs" style="left:6px;top:22px;width:17px;height:3px;border-top:1px solid #fff;border-bottom:1px solid #8888a0;background:#d8d8ea"></div><svg class="abs" style="left:9px;top:36.0px" width="23" height="22" viewBox="0 0 24 24"><path d="M14 21l8-8M17 22l6-6M20 23l3-3" stroke="#a8a8bc" stroke-width="1" opacity=".55"/><ellipse cx="12" cy="6" rx="8" ry="3.500" fill="#a8b8d8" stroke="#506090"/><path d="M4 6v9c3 5 13 5 16 0v-9" fill="#38c0e8" stroke="#0a4080"/><ellipse cx="12" cy="6" rx="8" ry="3.500" fill="#c0c8e0" stroke="#506090"/><path d="M1 13h8v-2.500l5 4-5 4v-2.500h-8z" fill="#f8d040" stroke="#b04010" stroke-width="1"/></svg><svg class="abs" style="left:9px;top:65.2px" width="23" height="22" viewBox="0 0 24 24"><path d="M14 21l8-8M17 22l6-6M20 23l3-3" stroke="#a8a8bc" stroke-width="1" opacity=".55"/><path d="M2 10c5-7 14-8 20-4l-3 5c-4-3-10-2-13 3z" fill="#b8e8f8" stroke="#2060b0"/><path d="M2 18c5-7 14-8 20-4l-3 5c-4-3-10-2-13 3z" fill="#38c0e8" stroke="#0a3890"/><path d="M11.500 8v9M8.500 11l3-3 3 3" stroke="#c03010" stroke-width="1.600" fill="none"/><path d="M11.500 9v7" stroke="#f8d040" stroke-width=".8"/></svg><svg class="abs" style="left:9px;top:94.4px" width="23" height="22" viewBox="0 0 24 24"><path d="M14 21l8-8M17 22l6-6M20 23l3-3" stroke="#a8a8bc" stroke-width="1" opacity=".55"/><path d="M8 10l8-6c4 3 5 7 4 12l-8 6c1-5 0-9-4-12z" fill="#38c0e8" stroke="#0a2880"/><path d="M8 10c4 3 5 7 4 12" stroke="#fff" stroke-width="1" fill="none"/><path d="M2 9l7-6M5 2.500h4.500v4.500" stroke="#000" stroke-width="1.300" fill="none"/></svg><svg class="abs" style="left:9px;top:123.6px" width="23" height="22" viewBox="0 0 24 24"><path d="M14 21l8-8M17 22l6-6M20 23l3-3" stroke="#a8a8bc" stroke-width="1" opacity=".55"/><path d="M2 16c0-6 4-12 10-12s10 6 10 12c-6 5-14 5-20 0z" fill="#38c0e8" stroke="#0a3890"/><path d="M2 16c0-6 4-12 10-12s10 6 10 12" stroke="#0a2060" stroke-dasharray="1.500 1.500" fill="none"/><path d="M6 15c2-6 4-8 6-8s4 2 6 8c-4 2-8 2-12 0z" fill="#f0e060" stroke="#807010" stroke-width=".8"/><path d="M2 16c6 5 14 5 20 0v4c-6 4-14 4-20 0z" fill="#2898d0" stroke="#0a3890"/></svg><svg class="abs" style="left:9px;top:152.8px" width="23" height="22" viewBox="0 0 24 24"><path d="M14 21l8-8M17 22l6-6M20 23l3-3" stroke="#a8a8bc" stroke-width="1" opacity=".55"/><path d="M3 14c0-12 16-12 18 0l-4 1c-2-6-9-6-10 0z" fill="#38c0e8" stroke="#0a3890"/><path d="M5 20c0-10 14-11 16-1l-4 1c-1-5-7-5-8 0z" fill="#b0e880" stroke="#0a3890"/><path d="M2 8c4-8 16-8 20 0" stroke="#0a2060" stroke-width="1.200" fill="none"/></svg><svg class="abs" style="left:9px;top:182.0px" width="23" height="22" viewBox="0 0 24 24"><path d="M14 21l8-8M17 22l6-6M20 23l3-3" stroke="#a8a8bc" stroke-width="1" opacity=".55"/><path d="M2 8l12-6 8 3-12 6z" fill="#38c0e8" stroke="#0a2880"/><path d="M2 13l12-6 8 3-12 6z" fill="#f8f050" stroke="#707010"/><path d="M2 18l12-6 8 3-12 6z" fill="#2090d0" stroke="#0a2880"/></svg><div class="dd" style="left:29.5px;top:56.0px"></div><div class="dd" style="left:29.5px;top:85.2px"></div><div class="dd" style="left:29.5px;top:114.4px"></div></div>
<div class="pn v" style="left:1238px;top:242px;width:43px;height:213px"><div class="tt">操.</div><div class="x"></div><div class="abs" style="left:6px;top:22px;width:17px;height:3px;border-top:1px solid #fff;border-bottom:1px solid #8888a0;background:#d8d8ea"></div><svg class="abs" style="left:10px;top:34.0px" width="23" height="22" viewBox="0 0 24 24"><path d="M14 21l8-8M17 22l6-6M20 23l3-3" stroke="#a8a8bc" stroke-width="1" opacity=".55"/><rect x="1" y="1" width="9" height="9" fill="#2868e0" stroke="#0820a0"/><rect x="12" y="1" width="9" height="9" fill="#60b8f8" stroke="#0820a0"/><rect x="1" y="12" width="9" height="9" fill="#40d8f0" stroke="#0820a0"/><rect x="12" y="12" width="9" height="9" fill="#2868e0" stroke="#0820a0"/><path d="M2 4l3-3M2 8l6-6M5 9l4-4M13 4l3-3M13 8l6-6M16 9l4-4M13 15l3-3M13 19l6-6M16 20l4-4" stroke="#a0d8ff" stroke-width=".9"/></svg><svg class="abs" style="left:10px;top:64.4px" width="23" height="22" viewBox="0 0 24 24"><path d="M14 21l8-8M17 22l6-6M20 23l3-3" stroke="#a8a8bc" stroke-width="1" opacity=".55"/><path d="M2 8l18-6-4 10-8 8z" fill="#38b8f0" stroke="#0a2880"/><path d="M2 8l8 4 6 0" stroke="#fff" stroke-width="1.200" fill="none"/><path d="M1 20c3-6 6-8 9-8" stroke="#1028a0" stroke-width="1.600" fill="none"/><rect x="15" y="5" width="7" height="6" fill="#f8e8a0" stroke="#604000"/><rect x="17" y="7" width="3" height="2.500" fill="#a06020"/></svg><svg class="abs" style="left:10px;top:94.8px" width="23" height="22" viewBox="0 0 24 24"><path d="M14 21l8-8M17 22l6-6M20 23l3-3" stroke="#a8a8bc" stroke-width="1" opacity=".55"/><path d="M3 8l6-5h11v12l-6 6h-11z" fill="#d8f4ff" stroke="#0a3050" stroke-width="1.200"/><path d="M3 8h11v13M14 8l6-5" stroke="#0a3050" stroke-width="1.200" fill="none"/><path d="M3 8h11v13h-11z" fill="#50d0f0" stroke="#0a3050"/><path d="M12 12h5v5h-5z" fill="#f8d040" stroke="#a05010"/><path d="M16 16l5 5" stroke="#c03010" stroke-width="1.600"/></svg><svg class="abs" style="left:10px;top:125.19999999999999px" width="23" height="22" viewBox="0 0 24 24"><path d="M14 21l8-8M17 22l6-6M20 23l3-3" stroke="#a8a8bc" stroke-width="1" opacity=".55"/><path d="M2 6l8-4c8 1 12 6 12 13l-6 6c0-8-5-13-14-15z" fill="#f8f0a0" stroke="#0a2880"/><path d="M2 6l8-4c8 1 12 6 12 13" stroke="#e04020" stroke-width="1.200" fill="none"/><path d="M2 6c9 2 14 7 14 15" stroke="#1838c0" stroke-width="1.500" fill="none"/></svg><svg class="abs" style="left:10px;top:155.6px" width="23" height="22" viewBox="0 0 24 24"><path d="M14 21l8-8M17 22l6-6M20 23l3-3" stroke="#a8a8bc" stroke-width="1" opacity=".55"/><path d="M12 4l8 5v11l-8-5z" fill="#38b8f0" stroke="#0a2880"/><path d="M10 1v20" stroke="#000" stroke-dasharray="2 1.500" stroke-width="1.200"/><path d="M8 4c-7 3-7 12-1 15" stroke="#707080" stroke-dasharray="1.500 1.500" fill="none" stroke-width="1.200"/><path d="M5 20c3 3 9 3 12 0M14 19l3 1-1 3" stroke="#000" stroke-width="1.300" fill="none"/></svg><svg class="abs" style="left:10px;top:186.0px" width="23" height="22" viewBox="0 0 24 24"><path d="M14 21l8-8M17 22l6-6M20 23l3-3" stroke="#a8a8bc" stroke-width="1" opacity=".55"/><path d="M2 16l10-9 9 4-7 10z" fill="#38c0e8" stroke="#0a2880"/><path d="M2 16c3-1 4 0 5 4" stroke="#0a2880" stroke-width="1.500" fill="none"/><path d="M12 7l5-5 6 5-2 4z" fill="#f8f050" stroke="#0a2880"/><path d="M14 2h9v7z" fill="#202020"/></svg><div class="dd" style="left:30.5px;top:54.0px"></div><div class="dd" style="left:30.5px;top:84.4px"></div><div class="dd" style="left:30.5px;top:114.8px"></div><div class="dd" style="left:30.5px;top:145.2px"></div><div class="dd" style="left:30.5px;top:175.6px"></div></div>
<div class="pn v" style="left:1253px;top:474px;width:43px;height:183px"><div class="tt">复.</div><div class="x"></div><div class="abs" style="left:6px;top:22px;width:17px;height:3px;border-top:1px solid #fff;border-bottom:1px solid #8888a0;background:#d8d8ea"></div><svg class="abs" style="left:10px;top:34.0px" width="24" height="23" viewBox="0 0 24 24"><path d="M14 21l8-8M17 22l6-6M20 23l3-3" stroke="#a8a8bc" stroke-width="1" opacity=".55"/><path d="M4 13c-3-8 8-13 14-5l2-2v8h-8l3-3c-3-4-9-2-7 3z" fill="#38b8e0" stroke="#0a2880"/><text x="9" y="22" font-family="Liberation Sans,sans-serif" font-size="8" font-weight="bold" fill="#0a2880">xN</text></svg><svg class="abs" style="left:10px;top:63.8px" width="24" height="23" viewBox="0 0 24 24"><path d="M4 2v19M10 2v19M16 2v19M1 5h19M1 11h19M1 17h19" stroke="#2020c0" stroke-width="1"/><g fill="#2020c0"><circle cx="4" cy="5" r="2"/><circle cx="10" cy="5" r="2"/><circle cx="16" cy="5" r="2"/><circle cx="4" cy="11" r="2"/><circle cx="10" cy="11" r="2"/><circle cx="16" cy="11" r="2"/><circle cx="4" cy="17" r="2"/><circle cx="10" cy="17" r="2"/><circle cx="16" cy="17" r="2"/></g></svg><svg class="abs" style="left:10px;top:93.6px" width="24" height="23" viewBox="0 0 24 24"><path d="M14 21l8-8M17 22l6-6M20 23l3-3" stroke="#a8a8bc" stroke-width="1" opacity=".55"/><path d="M2 5h6l2-2h8v12h-16z" fill="#f0c860" stroke="#806010"/><path d="M6 8c3-4 5 2 8-1" stroke="#d03020" stroke-width="1.300" fill="none"/><circle cx="10" cy="10" r="3" fill="none" stroke="#d03020"/><path d="M5 20l6-5h10l-5 6z" fill="#50d0f0" stroke="#0a3050"/><path d="M8 17l5-4h8l-4 4z" fill="#f8f080" stroke="#605010"/></svg><svg class="abs" style="left:10px;top:123.4px" width="24" height="23" viewBox="0 0 24 24"><path d="M14 21l8-8M17 22l6-6M20 23l3-3" stroke="#a8a8bc" stroke-width="1" opacity=".55"/><path d="M3 9l6-5 3 2 5-3v8l-8 6z" fill="#f8e880" stroke="#605010"/><path d="M3 16l8 5 10-7-3-2-8 6-5-4z" fill="#f0d860" stroke="#605010"/><path d="M9 15l10-12" stroke="#1838c0" stroke-width="2.200"/><path d="M8 17l1.500-3 2 1.500z" fill="#000"/></svg><svg class="abs" style="left:10px;top:153.2px" width="24" height="23" viewBox="0 0 24 24"><path d="M14 21l8-8M17 22l6-6M20 23l3-3" stroke="#a8a8bc" stroke-width="1" opacity=".55"/><path d="M3 22v-10l4 3v-4l4 3v-4l4 3h5v9z" fill="#f0d050" stroke="#403000"/><path d="M15 13l5-3v9l-5 3" fill="#c8a830" stroke="#403000"/><path d="M6 18h3v4h-3zM11 18h3v4h-3z" fill="#fff8c0" stroke="#403000" stroke-width=".6"/><path d="M5 8c1-5 7-7 11-4" stroke="#606070" stroke-width="2" fill="none"/></svg><div class="dd" style="left:31.5px;top:54.0px"></div><div class="dd" style="left:31.5px;top:83.8px"></div><div class="dd" style="left:31.5px;top:113.6px"></div><div class="dd" style="left:31.5px;top:143.4px"></div><div class="dd" style="left:31.5px;top:173.2px"></div></div>
<div id="rcol" class="abs"><div class="abs" style="left:5px;top:8px;width:10px;height:2px;border-top:1px solid #74748c;border-bottom:1px solid #fff"></div>
<div class="abs" style="left:5px;top:54px;width:10px;height:2px;border-top:1px solid #74748c;border-bottom:1px solid #fff"></div>
<div class="abs" style="left:5px;top:131px;width:10px;height:2px;border-top:1px solid #74748c;border-bottom:1px solid #fff"></div>
<div class="abs" style="left:5px;top:187px;width:10px;height:2px;border-top:1px solid #74748c;border-bottom:1px solid #fff"></div>
<div class="abs" style="left:5px;top:284px;width:10px;height:2px;border-top:1px solid #74748c;border-bottom:1px solid #fff"></div>
<div class="abs" style="left:5px;top:380px;width:10px;height:2px;border-top:1px solid #74748c;border-bottom:1px solid #fff"></div>
<div class="abs" style="left:5px;top:456px;width:10px;height:2px;border-top:1px solid #74748c;border-bottom:1px solid #fff"></div>
<svg class="abs" style="left:0;top:0" width="15" height="612" viewBox="1300 79 15 612">
<path d="M1309 98l6-1v11h-5z" fill="#34343c"/><path d="M1308.500 108l6.500 0v6l-4 5z" fill="#e4a868"/>
<path d="M1312.500 146h3v22h-3z" fill="#f2c6a2"/>
<path d="M1311 180h3v3h-3zM1313 185h2v4h-2zM1310 191h3v3h-3z" fill="#000"/>
<rect x="1309.500" y="226.500" width="8" height="14" fill="#fff" stroke="#203040"/><path d="M1311 236l3-3" stroke="#30a0c0"/>
<path d="M1310.500 325l5-5.500" stroke="#10207c" stroke-width="1.500" fill="none"/><path d="M1310 352.500l5.500-5.500v5.500z" fill="#f4e890" stroke="#10207c" stroke-width=".9"/>
<path d="M1311 391c0-6 2-10 5-11v11z" fill="#70c8f0" stroke="#1838b0"/><path d="M1309.500 416l3-9 3-2v8z" fill="#2858c8" stroke="#0a2070"/><path d="M1309.500 444c1-5 3-8 6-9" stroke="#1838c0" stroke-width="2.200" fill="none"/>
<circle cx="1318" cy="477.500" r="7" fill="#e4f0fa" stroke="#2060a8" stroke-width="1.200"/><path d="M1311 518c0-5 2-8 5-9" stroke="#2048b0" stroke-width="1.800" fill="none"/>
<path d="M1310.500 553l5-8v16z" fill="#3888d8" stroke="#0a3870" stroke-width=".8"/><path d="M1311 553l4.500-3" stroke="#50e0f0" stroke-width="1.500"/>
<path d="M1310.500 588c1-7 3-11 5-13v14z" fill="#50d8f0" stroke="#2080a0" stroke-width=".7"/>
<rect x="1311" y="603.500" width="6" height="16" fill="#f0e060" stroke="#000" stroke-width="1.800"/>
<path d="M1311 648l4.500-10v10z" fill="#e8d090" stroke="#806020" stroke-width=".8"/>
<path d="M1310.500 674c0-6 3-10 5-17v19z" fill="#40e0f0" stroke="#20a0b0" stroke-width=".7"/>
</svg></div>
<div id="tb2" class="abs"></div><svg class="abs" style="left:0px;top:701.5px;overflow:visible" width="21" height="21" viewBox="0 0 24 24"><path d="M-4 3h14l5 5v14h-19z" fill="#fffce0" stroke="#404040" stroke-width="1.200"/><path d="M10 3v5h5" fill="#e8e4c0" stroke="#404040"/></svg>
<svg class="abs" style="left:25px;top:701.5px;overflow:visible" width="21" height="21" viewBox="0 0 24 24"><path d="M14 21l8-8M17 22l6-6M20 23l3-3" stroke="#a8a8bc" stroke-width="1" opacity=".55"/><path d="M1 7h6l2 2h8v4h-16z" fill="#e8b830" stroke="#604000"/><path d="M1 20l4-8h17l-5 8z" fill="#f8d860" stroke="#604000"/><path d="M1 20v-12" stroke="#604000"/><path d="M14 5c2-3 5-3 7-1M19 2l2.500 2-3 1.500" stroke="#303030" stroke-width="1.100" fill="none"/></svg>
<svg class="abs" style="left:53px;top:701.5px;overflow:visible" width="21" height="21" viewBox="0 0 24 24"><path d="M14 21l8-8M17 22l6-6M20 23l3-3" stroke="#a8a8bc" stroke-width="1" opacity=".55"/><path d="M2 2h19l2 2v18h-21z" fill="#a4a43c" stroke="#000" stroke-width="1.600"/><path d="M6 2h13v9h-13z" fill="#f4f4f8" stroke="#202020" stroke-width=".6"/><path d="M8 4.500h9M8 6.500h9M8 8.500h9" stroke="#3868c0" stroke-width=".9"/><path d="M7 15h12v7h-12z" fill="#101010"/><path d="M14.500 16h3.500v5h-3.500z" fill="#f0f0f0"/></svg>
<svg class="abs" style="left:81px;top:701.5px;overflow:visible" width="21" height="21" viewBox="0 0 24 24"><path d="M14 21l8-8M17 22l6-6M20 23l3-3" stroke="#a8a8bc" stroke-width="1" opacity=".55"/><path d="M6 10l3-8h10l-2 8z" fill="#fff" stroke="#404040"/><path d="M9 4h8M8.500 6h8M8 8h8" stroke="#3060c0" stroke-width=".9"/><path d="M1 12l4-3h15l3 3v7h-22z" fill="#e8e098" stroke="#403800"/><path d="M1 12h22v7h-22z" fill="#d0c870" stroke="#403800"/><path d="M3 19l2 3h14l2-3" fill="#b0a850" stroke="#403800"/><path d="M16 14.500h4" stroke="#30a030" stroke-width="1.500"/></svg>
<svg class="abs" style="left:108px;top:701.5px;overflow:visible" width="21" height="21" viewBox="0 0 24 24"><path d="M4 1l8 14M18 1l-8 14" stroke="#50505c" stroke-width="2"/><path d="M5.500 2l6.500 11.500M16.500 2l-6.500 11.500" stroke="#e8e8f0" stroke-width=".8"/><circle cx="6.500" cy="19" r="3.300" fill="#2858e0" stroke="#0a1c90" stroke-width="1.200"/><circle cx="16.500" cy="19" r="3.300" fill="#2858e0" stroke="#0a1c90" stroke-width="1.200"/><circle cx="6.500" cy="19" r="1.200" fill="#a0c0ff"/><circle cx="16.500" cy="19" r="1.200" fill="#a0c0ff"/></svg>
<svg class="abs" style="left:136px;top:701.5px;overflow:visible" width="21" height="21" viewBox="0 0 24 24"><path d="M14 21l8-8M17 22l6-6M20 23l3-3" stroke="#a8a8bc" stroke-width="1" opacity=".55"/><path d="M2 2h8l3 3v11h-11z" fill="#fff" stroke="#303030"/><path d="M4 6h6M4 8.500h7M4 11h7" stroke="#3050a0" stroke-width=".9"/><path d="M9 7h8l3 3v12h-11z" fill="#fff" stroke="#303030"/><path d="M11 12h6M11 14.500h7M11 17h7M11 19.500h7" stroke="#3050a0" stroke-width=".9"/></svg>
<svg class="abs" style="left:164px;top:701.5px;overflow:visible" width="21" height="21" viewBox="0 0 24 24"><path d="M14 21l8-8M17 22l6-6M20 23l3-3" stroke="#a8a8bc" stroke-width="1" opacity=".55"/><path d="M1 5h16v15h-16z" fill="#b89838" stroke="#403000"/><path d="M5 3h8v4h-8z" fill="#d8d8d8" stroke="#303030"/><path d="M7 1.500h4v2h-4z" fill="#909090" stroke="#303030" stroke-width=".6"/><path d="M10 10h8l3 3v9h-11z" fill="#fff" stroke="#303030"/><path d="M12 15h7M12 17.500h7M12 20h7" stroke="#2040a0" stroke-width="1"/></svg>
<svg class="abs" style="left:192px;top:701.5px;overflow:visible" width="21" height="21" viewBox="0 0 24 24"><path d="M14 21l8-8M17 22l6-6M20 23l3-3" stroke="#a8a8bc" stroke-width="1" opacity=".55"/><path d="M3 6l2 9 8-3-3-1.500c3-4 8-2 7 3-1 3-3 5-5 6h4c4-2 6-7 4-11-3-5-10-5-14 0z" fill="#30b878" stroke="#0a5838" stroke-width="1"/></svg>
<svg class="abs" style="left:222px;top:701.5px;overflow:visible" width="21" height="21" viewBox="0 0 24 24"><path d="M14 21l8-8M17 22l6-6M20 23l3-3" stroke="#a8a8bc" stroke-width="1" opacity=".55"/><path d="M21 6l-2 9-8-3 3-1.500c-3-4-8-2-7 3 1 3 3 5 5 6h-4c-4-2-6-7-4-11 3-5 10-5 14 0z" fill="#e4e4ec" stroke="#a0a0b0" stroke-width="1"/></svg>
<svg class="abs" style="left:252px;top:701.5px;overflow:visible" width="21" height="21" viewBox="0 0 24 24"><path d="M14 21l8-8M17 22l6-6M20 23l3-3" stroke="#a8a8bc" stroke-width="1" opacity=".55"/><path d="M1 2v15l3.500-3 2.500 6 2.500-1-2.500-6h4.500z" fill="#f8e870" stroke="#000" stroke-width=".9"/><text x="10" y="19" font-family="Liberation Sans,sans-serif" font-weight="bold" font-size="21" fill="#1838b0">?</text></svg>
<svg class="abs" style="left:298px;top:701.5px;overflow:visible" width="21" height="21" viewBox="0 0 24 24"><path d="M14 21l8-8M17 22l6-6M20 23l3-3" stroke="#a8a8bc" stroke-width="1" opacity=".55"/><text x="0" y="19" font-family="Liberation Serif,serif" font-style="italic" font-weight="bold" font-size="24" fill="#000">f</text><text x="8" y="19" font-family="Liberation Sans,sans-serif" font-weight="bold" font-size="11" fill="#000">(x)</text></svg>
<svg class="abs" style="left:327px;top:701.5px;overflow:visible" width="21" height="21" viewBox="0 0 24 24"><path d="M14 21l8-8M17 22l6-6M20 23l3-3" stroke="#a8a8bc" stroke-width="1" opacity=".55"/><path d="M11 2c6 0 10 3 10 7s-4 7-10 7l-6 5 1-6c-3-1-5-3-5-6 0-4 4-7 10-7z" fill="#fff" stroke="#000" stroke-width="1.500"/><path d="M5 7h12M4 9.500h14M5 12h11" stroke="#000" stroke-width="1" stroke-dasharray="2 1"/></svg>
<svg class="abs" style="left:378px;top:701.5px;overflow:visible" width="21" height="21" viewBox="0 0 24 24"><path d="M14 21l8-8M17 22l6-6M20 23l3-3" stroke="#a8a8bc" stroke-width="1" opacity=".55"/><rect x="1" y="2" width="19" height="18" fill="#fff" stroke="#000"/><rect x="1" y="2" width="19" height="4" fill="#1828b0"/><path d="M1 9.500h19M1 13h19M1 16.500h19M5 6v14M9 6v14M13 6v14M17 6v14" stroke="#000" stroke-width="1.100"/></svg>
<svg class="abs" style="left:407px;top:701.5px;overflow:visible" width="21" height="21" viewBox="0 0 24 24"><rect x="1" y="9" width="5" height="7" fill="#f8f090" stroke="#000"/><path d="M6 12.500h10M10 12.500l5-7M10 12.500l5 7" stroke="#000" stroke-width="1.100"/><path d="M12 5l3-2v4z M12 20l3-2v4z M11 12.500l3-2v4z" fill="#d02020"/><g fill="#fff" stroke="#1838d0" stroke-width="1.200"><rect x="17" y="1.500" width="4" height="4"/><rect x="17" y="10.500" width="4" height="4"/><rect x="17" y="18.500" width="4" height="4"/></g></svg>
<svg class="abs" style="left:436px;top:701.5px;overflow:visible" width="21" height="21" viewBox="0 0 24 24"><path d="M14 21l8-8M17 22l6-6M20 23l3-3" stroke="#a8a8bc" stroke-width="1" opacity=".55"/><path d="M5 10v-4c0-6 10-6 10 0v4" fill="none" stroke="#404048" stroke-width="2.400"/><path d="M6 10v-4c0-4.500 8-4.500 8 0v4" fill="none" stroke="#d8d8e0" stroke-width=".8"/><rect x="2" y="10" width="16" height="12" rx="1.500" fill="#909098" stroke="#303038"/><path d="M10 13v6M8 15l2-2 2 2" stroke="#202028" stroke-width="1.200" fill="none"/></svg>
<svg class="abs" style="left:465px;top:701.5px;overflow:visible" width="21" height="21" viewBox="0 0 24 24"><rect x="1" y="2" width="8" height="8" fill="#30a0a8" stroke="#0a3040"/><rect x="1" y="13" width="8" height="8" fill="#30a0a8" stroke="#0a3040"/><path d="M3 4h4M3 6.500h4M3 15h4M3 17.500h4" stroke="#c8f0f0" stroke-width=".9"/><path d="M11 1c3 0 2 4 2 7s1 3 2 3.500c-1 .5-2 .500-2 3.500s1 7-2 7" stroke="#000" stroke-width="1.300" fill="none"/><path d="M17 10h4M17 13h4" stroke="#000" stroke-width="1.300"/><path d="M2 23h6" stroke="#000" stroke-dasharray="1 1"/></svg>
<svg class="abs" style="left:512px;top:701.5px;overflow:visible" width="21" height="21" viewBox="0 0 24 24"><path d="M14 21l8-8M17 22l6-6M20 23l3-3" stroke="#a8a8bc" stroke-width="1" opacity=".55"/><path d="M2 5l5 1 4 5 7-1c3 0 4 2 2 3l-7 2-1 6-2 1-1-6-5 1-2-2 4-3-3-4z" fill="#50c8f0" stroke="#0a3888" stroke-width="1"/><path d="M3 2l3 3M1 9l4 0" stroke="#0a3888" stroke-width="1"/></svg>
<svg class="abs" style="left:540px;top:701.5px;overflow:visible" width="21" height="21" viewBox="0 0 24 24"><path d="M14 21l8-8M17 22l6-6M20 23l3-3" stroke="#a8a8bc" stroke-width="1" opacity=".55"/><rect x="1" y="3" width="19" height="18" fill="#f8f488" stroke="#20a098" stroke-width="1.400"/><path d="M10.500 5v14M3 12h15" stroke="#000" stroke-width="1.200"/><path d="M10.500 4l-2.500 3h5zM10.500 20l-2.500-3h5zM2.500 12l3-2.500v5zM18.500 12l-3-2.500v5z" fill="#000"/></svg>
<svg class="abs" style="left:568px;top:701.5px;overflow:visible" width="21" height="21" viewBox="0 0 24 24"><path d="M14 21l8-8M17 22l6-6M20 23l3-3" stroke="#a8a8bc" stroke-width="1" opacity=".55"/><path d="M11 1l-3.500 4.500h2.500v4.500h-4.500v-2.500l-4.500 3.500 4.500 3.500v-2.500h4.500v4.500h-2.500l3.500 4.500 3.500-4.500h-2.500v-4.500h4.500v2.500l4.500-3.500-4.500-3.500v2.500h-4.500v-4.500h2.500z" fill="#1828a0" stroke="#081050" stroke-width=".6"/><circle cx="11" cy="11" r="1.500" fill="#a0b0ff"/></svg>
<svg class="abs" style="left:596px;top:701.5px;overflow:visible" width="21" height="21" viewBox="0 0 24 24"><path d="M14 21l8-8M17 22l6-6M20 23l3-3" stroke="#a8a8bc" stroke-width="1" opacity=".55"/><path d="M2 11c0-6 18-7 19-1" stroke="#000" stroke-width="1.300" fill="none"/><path d="M3 8l-1.500 4 4 0" stroke="#000" stroke-width="1.200" fill="none"/><path d="M5 9c3-4 10-4 13-1l2 4c-2 3-5 4-8 4l-6-2z" fill="#f8c8a0" stroke="#803020" stroke-width="1"/><circle cx="13" cy="17" r="4.500" fill="#3070e0" stroke="#0a2080"/><path d="M10 15c2-2 4-2 6 0" stroke="#90c0ff" fill="none"/></svg>
<svg class="abs" style="left:625px;top:701.5px;overflow:visible" width="21" height="21" viewBox="0 0 24 24"><path d="M14 21l8-8M17 22l6-6M20 23l3-3" stroke="#a8a8bc" stroke-width="1" opacity=".55"/><circle cx="8" cy="8" r="6.500" fill="#fff" stroke="#1838a0" stroke-width="1.800"/><path d="M4.500 8h7M8 4.500v7" stroke="#000" stroke-width="2"/><path d="M13 13l8 8" stroke="#1838a0" stroke-width="3.500" stroke-linecap="round"/><path d="M13.500 13.500l7 7" stroke="#60b0f0" stroke-width="1.200"/></svg>
<svg class="abs" style="left:653px;top:701.5px;overflow:visible" width="21" height="21" viewBox="0 0 24 24"><path d="M14 21l8-8M17 22l6-6M20 23l3-3" stroke="#a8a8bc" stroke-width="1" opacity=".55"/><circle cx="8" cy="8" r="6.500" fill="#fff" stroke="#1838a0" stroke-width="1.800"/><path d="M4.500 8h7" stroke="#000" stroke-width="2"/><path d="M13 13l8 8" stroke="#1838a0" stroke-width="3.500" stroke-linecap="round"/><path d="M13.500 13.500l7 7" stroke="#60b0f0" stroke-width="1.200"/></svg>
<svg class="abs" style="left:680px;top:701.5px;overflow:visible" width="21" height="21" viewBox="0 0 24 24"><path d="M14 21l8-8M17 22l6-6M20 23l3-3" stroke="#a8a8bc" stroke-width="1" opacity=".55"/><path d="M1 20l8-7h13l-8 7z" fill="#50c8e0" stroke="#0a5878"/><path d="M11 16v-12" stroke="#c07828" stroke-width="1.300" stroke-dasharray="1.500 1"/><path d="M8 6l3-4 3 4z" fill="#e8e8ff" stroke="#3030a0" stroke-width=".8"/></svg>
<svg class="abs" style="left:708px;top:701.5px;overflow:visible" width="21" height="21" viewBox="0 0 24 24"><path d="M14 21l8-8M17 22l6-6M20 23l3-3" stroke="#a8a8bc" stroke-width="1" opacity=".55"/><rect x="1" y="2" width="20" height="19" fill="#30d8f8" stroke="#0a2880" stroke-width="1.300"/><path d="M11 2v19M1 11.500h20" stroke="#0a2880" stroke-width="1.300"/><rect x="11.500" y="2.500" width="9" height="8.500" fill="#9870e8"/></svg>
<svg class="abs" style="left:736px;top:701.5px;overflow:visible" width="21" height="21" viewBox="0 0 24 24"><path d="M14 21l8-8M17 22l6-6M20 23l3-3" stroke="#a8a8bc" stroke-width="1" opacity=".55"/><path d="M2 8l6-6h13l-6 6z" fill="#90e8ff" stroke="#0a2880" stroke-width="1.200"/><path d="M15 8l6-6v13l-6 7z" fill="#28a8d8" stroke="#0a2880" stroke-width="1.200"/><path d="M2 8h13v14h-13z" fill="#40d0f8" stroke="#0a2880" stroke-width="1.200"/></svg>
<svg class="abs" style="left:767px;top:701.5px;overflow:visible" width="21" height="21" viewBox="0 0 24 24"><path d="M14 21l8-8M17 22l6-6M20 23l3-3" stroke="#a8a8bc" stroke-width="1" opacity=".55"/><ellipse cx="10" cy="5" rx="8" ry="3.500" fill="#f8f8d0" stroke="#303000" stroke-width="1.300"/><path d="M2 5v13c0 5 16 5 16 0v-13" fill="#f0e860" stroke="#303000" stroke-width="1.300"/><path d="M7 8v13h7v-13z" fill="#1828a0"/><path d="M10 9v12" stroke="#30c0d0" stroke-width="1.500"/><ellipse cx="10" cy="5" rx="8" ry="3.500" fill="#f8f8d0" stroke="#303000" stroke-width="1.300"/></svg>
<svg class="abs" style="left:797px;top:701.5px;overflow:visible" width="21" height="21" viewBox="0 0 24 24"><rect x="1" y="2" width="19" height="19" fill="#60c8f0" stroke="#0a2880" stroke-width="1.300"/><path d="M4 9l5-4h8l-4 4z M4 9h9v4h-9z M13 9l4-4v4l-4 4z" fill="#f0f0a0" stroke="#304000" stroke-width=".9"/><path d="M5 16l5-4h8l-4 4z M5 16h9v3h-9z M14 16l4-4v3l-4 4z" fill="#e8f8e8" stroke="#306030" stroke-width=".9"/></svg>
<svg class="abs" style="left:826px;top:701.5px;overflow:visible" width="21" height="21" viewBox="0 0 24 24"><rect x="1" y="2" width="19" height="19" fill="#40c0f0" stroke="#0a2880" stroke-width="1.300"/><path d="M4 14l5-4h8l-4 4z M4 14h9v4h-9z M13 14l4-4v4l-4 4z" fill="#f0f0a0" stroke="#304000" stroke-width=".9"/></svg>
<svg class="abs" style="left:870px;top:701.5px;overflow:visible" width="21" height="21" viewBox="0 0 24 24"><circle cx="6" cy="5" r="3.500" fill="#2090c0" stroke="#0a3050"/><path d="M10 3c4-2 8 0 9 4M16 6.500l3 1 1-3" stroke="#1828b0" stroke-width="1.300" fill="none" stroke-dasharray="2.500 1"/><path d="M3 14l4-3h13l-4 3z M3 14h13v7h-13z M16 14l4-3v7l-4 3z" fill="#f0f0f0" stroke="#000" stroke-width="1.100"/></svg>
<svg class="abs" style="left:918px;top:701.5px;overflow:visible" width="21" height="21" viewBox="0 0 24 24"><path d="M2 6h18M2 6l4-3M2 6l4 3M20 6l-4-3M20 6l-4 3" stroke="#1828b0" stroke-width="1.400" fill="none"/><rect x="1" y="13" width="20" height="7" fill="#f8c8b8" stroke="#802020"/><path d="M4 13v4M7 13v3M10 13v4M13 13v3M16 13v4M19 13v3" stroke="#802020" stroke-width=".9"/><path d="M1 21.500h20" stroke="#1838d0" stroke-width="1.400"/></svg>
<svg class="abs" style="left:946px;top:701.5px;overflow:visible" width="21" height="21" viewBox="0 0 24 24"><path d="M14 21l8-8M17 22l6-6M20 23l3-3" stroke="#a8a8bc" stroke-width="1" opacity=".55"/><path d="M8 2h10v5h-4v10h4v3h-9v-3h2v-10h-3z" fill="#484850" stroke="#101018"/><circle cx="6" cy="11" r="5" fill="#40a8b0" stroke="#0a3040"/><path d="M3 9c2-2 4-2 6 0" stroke="#b0f0f0" fill="none"/></svg>
<svg class="abs" style="left:977px;top:701.5px;overflow:visible" width="21" height="21" viewBox="0 0 24 24"><path d="M14 21l8-8M17 22l6-6M20 23l3-3" stroke="#a8a8bc" stroke-width="1" opacity=".55"/><circle cx="8" cy="4" r="2.500" fill="none" stroke="#202020" stroke-width="1.500"/><path d="M3 8c0-2 10-2 10 0v11c0 3-10 3-10 0z" fill="#d0b020" stroke="#504000"/><path d="M5 9v10" stroke="#f8f090" stroke-width="1.500"/></svg>
<svg class="abs" style="left:1021px;top:701.5px;overflow:visible" width="21" height="21" viewBox="0 0 24 24"><path d="M14 21l8-8M17 22l6-6M20 23l3-3" stroke="#a8a8bc" stroke-width="1" opacity=".55"/><path d="M1 7h4l1-3h6l1 3h9v12h-21z" fill="#484850" stroke="#101018"/><path d="M1 7h21v3h-21z" fill="#c8c8d0" stroke="#101018" stroke-width=".7"/><circle cx="12" cy="14" r="4.500" fill="#e8e8f0" stroke="#101018" stroke-width="1.300"/><circle cx="12" cy="14" r="2.300" fill="#181820"/><rect x="16" y="4.500" width="4" height="2.500" fill="#909098" stroke="#101018" stroke-width=".6"/></svg>
<svg class="abs" style="left:1068px;top:701.5px;overflow:visible" width="21" height="21" viewBox="0 0 24 24"><path d="M14 21l8-8M17 22l6-6M20 23l3-3" stroke="#a8a8bc" stroke-width="1" opacity=".55"/><circle cx="11" cy="12" r="10" fill="#a8a8b4"/><path d="M4 12c0-8 12-8 13-2 0 4-6 5-7 2 0-2 3-2 3 0M18 12c0 8-12 8-13 2 0-4 6-5 7-2" stroke="#e8e8f0" stroke-width="2.600" fill="none"/></svg>
<svg class="abs" style="left:1096px;top:701.5px;overflow:visible" width="21" height="21" viewBox="0 0 24 24"><path d="M14 21l8-8M17 22l6-6M20 23l3-3" stroke="#a8a8bc" stroke-width="1" opacity=".55"/><circle cx="11" cy="12" r="10" fill="#101860"/><path d="M3 10c2-8 12-8 14-3M5 18c-3-3-2-8 1-10" stroke="#e8d890" stroke-width="2" fill="none"/><circle cx="11" cy="12" r="10" fill="none" stroke="#3088c0" stroke-width="1.400"/><path d="M9 21v-5l-2-3 1.500-1 2.500 2v-9c0-1.500 2.500-1.500 2.500 0v5l5 1.500c1 .500 1.500 1.500 1 3l-1 6.500z" fill="#fff" stroke="#000" stroke-width="1"/></svg>
<svg class="abs" style="left:1124px;top:701.5px;overflow:visible" width="21" height="21" viewBox="0 0 24 24"><path d="M14 21l8-8M17 22l6-6M20 23l3-3" stroke="#a8a8bc" stroke-width="1" opacity=".55"/><path d="M8 3v14l-6 5M8 17h13" stroke="#000" stroke-width="1.300" fill="none"/><path d="M8 1l-2 4h4zM23 17l-4-2v4zM1 23l1-4.500 3 3.500z" fill="#1828b0"/></svg>
<svg class="abs" style="left:1153px;top:701.5px;overflow:visible" width="21" height="21" viewBox="0 0 24 24"><rect x="1" y="1" width="19" height="21" fill="none" stroke="#f8f8ff" stroke-dasharray="1.500 1.500"/><g fill="#1838d0"><rect x="9" y="3" width="6" height="2.500"/><rect x="3" y="8" width="5" height="2.500"/><rect x="11" y="8" width="7" height="2.500"/><rect x="3" y="13" width="5" height="2.500"/><rect x="11" y="13" width="7" height="2.500"/><rect x="11" y="18" width="7" height="2.500"/></g><path d="M8 9.500h3M8 14.500h3M9.500 14.500v5h1.500" stroke="#1838d0" stroke-width=".9" fill="none"/></svg>
<svg class="abs" style="left:1181px;top:701.5px;overflow:visible" width="21" height="21" viewBox="0 0 24 24"><path d="M2 1v21M6 1v21M10 1v21M14 1v21M18 1v21M0 4h21M0 8h21M0 12h21M0 16h21M0 20h21" stroke="#1848d8" stroke-width="1.300"/></svg>
<svg class="abs" style="left:1210px;top:701.5px;overflow:visible" width="21" height="21" viewBox="0 0 24 24"><path d="M14 21l8-8M17 22l6-6M20 23l3-3" stroke="#a8a8bc" stroke-width="1" opacity=".55"/><path d="M3 7l5-5h13l-5 5z" fill="#a0f0ff" stroke="#0a4878" stroke-width="1.200"/><path d="M16 7l5-5v14l-5 6z" fill="#28a8c8" stroke="#0a4878" stroke-width="1.200"/><path d="M3 7h13v15h-13z" fill="#50d8f0" stroke="#0a4878" stroke-width="1.200"/><path d="M0 12h20M0 17h20" stroke="#e8ffff" stroke-width="1" opacity=".8"/><path d="M14 11l3 2-2 3" stroke="#406080" fill="none"/></svg>
<svg class="abs" style="left:1241px;top:701.5px;overflow:visible" width="21" height="21" viewBox="0 0 24 24"><path d="M14 21l8-8M17 22l6-6M20 23l3-3" stroke="#a8a8bc" stroke-width="1" opacity=".55"/><path d="M3 8l5-5h12v13l-5 5h-12z" fill="#30c8d8" stroke="#0a3858" stroke-width="1.300"/><path d="M6 10h8v9h-8z" fill="#d0d0e8" stroke="#0a3858" stroke-width="1.300"/><path d="M3 8h12v13M15 8l5-5" stroke="#0a3858" stroke-width="1.300" fill="none"/></svg>
<svg class="abs" style="left:358px;top:701px" width="10" height="21" viewBox="0 0 10 21"><path d="M2 7v-3c0-4 6-4 6 0v3" fill="none" stroke="#b0b0c0" stroke-width="1.600"/><rect x="1" y="7" width="8" height="6" fill="#c8c8d4" stroke="#a0a0b0"/><circle cx="5" cy="17" r="2.500" fill="#e8e8f0" stroke="#a0a0b0"/></svg>
<div class="dd" style="left:212px;top:722px"></div>
<div class="dd" style="left:242px;top:722px"></div>
<div class="dd" style="left:397px;top:722px"></div>
<div class="dd" style="left:455px;top:722px"></div>
<div class="dd" style="left:756px;top:722px"></div>
<div class="dd" style="left:1200px;top:722px"></div>
<div class="dd" style="left:1230px;top:722px"></div>
<div class="abs" style="left:785px;top:719px;width:9px;height:8px;background:#fff"></div><div class="dd" style="left:786px;top:722px"></div>
<div class="sep" style="left:287px;top:695px"></div>
<div class="sep" style="left:500px;top:695px"></div>
<div class="sep" style="left:859px;top:695px"></div>
<div class="sep" style="left:906px;top:695px"></div>
<div class="sep" style="left:1009px;top:695px"></div>
<div class="sep" style="left:1056px;top:695px"></div>
<svg class="abs" style="left:1274px;top:697px" width="10" height="9"><path d="M1 1l3 3.500-3 3.500M5 1l3 3.500-3 3.500" stroke="#9a9ab0" stroke-width="1" fill="none"/></svg>
<svg class="abs" style="left:1290px;top:693px" width="25" height="34" viewBox="0 0 25 34"><path d="M13 2c6 0 8 3 5 7l-4 3" stroke="#d02818" stroke-width="1.600" fill="none"/><path d="M5 8c8-2 14 2 11 8s-10 7-14 6l5-13" stroke="#2838a0" stroke-width="1.700" fill="none"/><path d="M24 7c-5-1-8 2-5 5s2 7-4 7" stroke="#c8a020" stroke-width="1.600" fill="none"/><text x="9" y="30" font-family="Liberation Sans,sans-serif" font-style="italic" font-weight="bold" font-size="9.500" fill="#2838a0">CATIA</text></svg>
<div id="status" class="abs"><div class="abs" style="left:0;top:7px;font:12px/14px 'Liberation Mono','Noto Sans CJK SC',monospace;white-space:pre;color:#000">定  个元素</div>
<div class="abs" style="left:970px;top:2px;width:299px;height:12px;background:#fff;border:2px solid;border-color:#505058 #fff #fff #505058"></div>
<div class="abs" style="left:1271px;top:3px;width:31px;height:10px;background:#d8d8ec;border-top:0px solid #fff;border-left:1px solid #fff"></div>
<div class="abs" style="left:1281px;top:6px;width:7px;height:3px;background:#606070;border-top:0px solid #f8f8ff"></div>
<div class="abs" style="left:1294px;top:4px;width:2px;height:8px;background:#50505c;border-right:1px solid #fff"></div>
<div class="abs" style="left:1303px;top:1px;width:1px;height:12px;background:#40404c"></div></div>
</body></html>
